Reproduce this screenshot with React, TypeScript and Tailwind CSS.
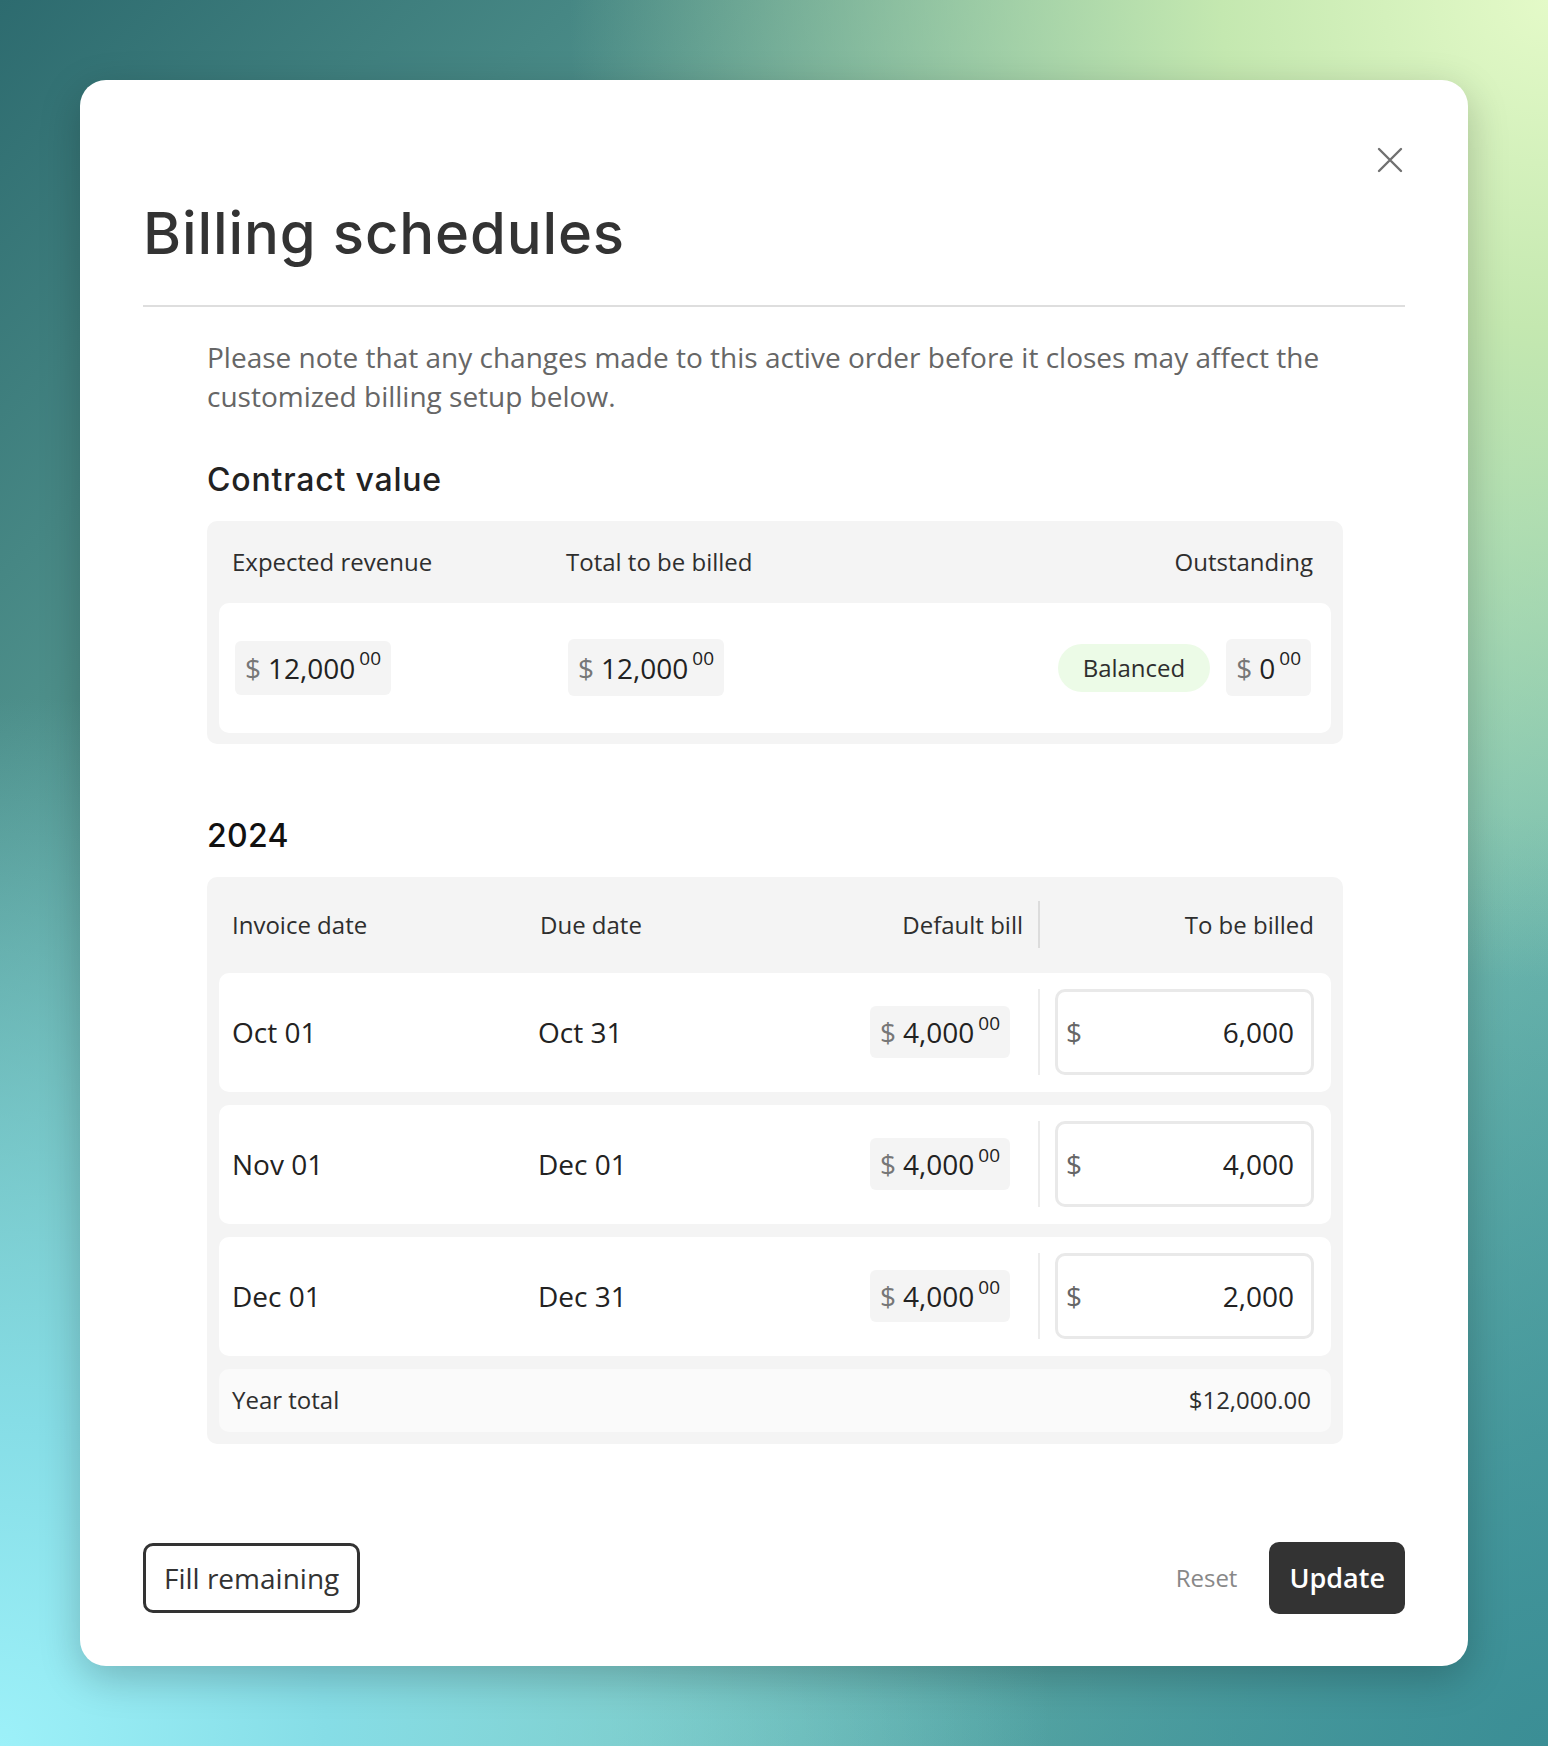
import React from 'react';

const heading = { fontFamily: 'Inter, "Noto Sans", sans-serif' };
const body = { fontFamily: '"Open Sans", "Noto Sans", sans-serif' };

function Money({ value, h = 'h-[54px]' }: { value: string; h?: string }) {
  return (
    <span className={`inline-flex ${h} items-center rounded-[6px] bg-[#f4f4f4] px-[10px] text-[28px] leading-none`}>
      <span className="text-[#777]">$</span>
      <span className="ml-[7px] text-[#222]">{value}</span>
      <sup className="ml-[4px] text-[19px] text-[#222]">00</sup>
    </span>
  );
}

interface Row {
  invoice: string;
  due: string;
  bill: string;
  toBill: string;
}

const rows: Row[] = [
  { invoice: 'Oct 01', due: 'Oct 31', bill: '4,000', toBill: '6,000' },
  { invoice: 'Nov 01', due: 'Dec 01', bill: '4,000', toBill: '4,000' },
  { invoice: 'Dec 01', due: 'Dec 31', bill: '4,000', toBill: '2,000' },
];

export default function App() {
  return (
    <div
      className="w-[1548px] h-[1746px] p-[80px] bg-[radial-gradient(circle_at_100%_0%,#e4fac8_0%,#c4e8b0_14%,transparent_42%),radial-gradient(circle_at_0%_100%,#9df1f9_0%,#86dde6_14%,transparent_45%),radial-gradient(circle_at_100%_100%,#3b8e95_0%,transparent_40%),linear-gradient(135deg,#2d6b6f_0%,#5fa399_35%,#83c6b4_60%,#4fa3a6_100%)]"
      style={body}
    >
      <div className="flex h-full flex-col rounded-[26px] bg-white px-[63px] pt-[56px] pb-[52px] shadow-[0_12px_40px_rgba(0,0,0,0.22)]">
        <div className="flex h-[48px] items-center justify-end pr-[2px]">
          <button className="flex h-[26px] w-[26px] items-center justify-center" aria-label="Close">
            <svg width="26" height="26" viewBox="0 0 26 26" fill="none">
              <path d="M2 2L24 24M24 2L2 24" stroke="#707070" strokeWidth="2.4" strokeLinecap="round" />
            </svg>
          </button>
        </div>

        <h1
          className="mt-[15px] text-[58px] leading-[1.2] font-medium tracking-[0.015em] text-[#333]"
          style={heading}
        >
          Billing schedules
        </h1>
        <div className="mt-[36px] h-[2px] bg-[#dedede]" />

        <div className="pl-[64px] pr-[62px]">
          <p className="mt-[31px] text-[28px] leading-[39px] text-[#666]">
            Please note that any changes made to this active order before it closes may affect the customized billing
            setup below.
          </p>

          <h2
            className="mt-[44px] text-[32px] leading-[40px] font-medium tracking-[0.025em] text-[#222]"
            style={heading}
          >
            Contract value
          </h2>

          <div className="mt-[21px] rounded-[10px] bg-[#f4f4f4] px-[12px] pb-[11px]">
            <div className="flex h-[82px] items-center px-[13px] text-[24px] font-medium text-[#2e2e2e]">
              <span className="w-[334px]">Expected revenue</span>
              <span className="flex-1">Total to be billed</span>
              <span className="pr-[5px]">Outstanding</span>
            </div>
            <div className="flex h-[130px] items-center rounded-[10px] bg-white pl-[16px] pr-[20px]">
              <div className="w-[333px]">
                <Money value="12,000" />
              </div>
              <div className="flex-1">
                <Money value="12,000" h="h-[57px]" />
              </div>
              <span className="flex h-[48px] items-center rounded-full bg-[#ecfbe7] px-[25px] text-[24px] font-medium text-[#2e2e2e]">
                Balanced
              </span>
              <span className="ml-[16px]">
                <Money value="0" h="h-[57px]" />
              </span>
            </div>
          </div>

          <h2
            className="mt-[72px] text-[32px] leading-[40px] font-medium tracking-[0.01em] text-[#111]"
            style={heading}
          >
            2024
          </h2>

          <div className="mt-[21px] rounded-[10px] bg-[#f4f4f4] px-[12px] pb-[12px]">
            <div className="flex h-[96px] items-center pl-[13px] pr-[17px] text-[24px] font-medium text-[#2e2e2e]">
              <span className="w-[308px]">Invoice date</span>
              <span className="flex-1">Due date</span>
              <span>Default bill</span>
              <span className="mx-[15px] h-[47px] w-[2px] bg-[#dcdcdc]" />
              <span className="w-[259px] text-right">To be billed</span>
            </div>

            <div className="flex flex-col gap-[13px]">
              {rows.map((r) => (
                <div
                  key={r.invoice}
                  className="flex h-[119px] items-center rounded-[10px] bg-white pl-[13px] pr-[17px] text-[28px] text-[#222]"
                >
                  <span className="w-[306px]">{r.invoice}</span>
                  <span className="flex-1">{r.due}</span>
                  <Money value={r.bill} h="h-[52px]" />
                  <span className="ml-[28px] mr-[15px] h-[86px] w-[2px] bg-[#ececec]" />
                  <div className="flex h-[86px] w-[259px] items-center justify-between rounded-[10px] border-[3px] border-[#e9e9e9] pl-[8px] pr-[17px]">
                    <span className="text-[#666]">$</span>
                    <span>{r.toBill}</span>
                  </div>
                </div>
              ))}

              <div className="flex h-[63px] items-center justify-between rounded-[10px] bg-[#fafafa] pl-[13px] pr-[20px] text-[24px] font-medium text-[#2e2e2e]">
                <span>Year total</span>
                <span>$12,000.00</span>
              </div>
            </div>
          </div>
        </div>

        <div className="mt-auto flex items-center justify-between">
          <button className="flex h-[70px] items-center rounded-[10px] border-[3px] border-[#333] px-[18px] text-[28px] font-medium text-[#333]">
            Fill remaining
          </button>
          <div className="flex items-center gap-[32px]">
            <button className="text-[24px] font-medium text-[#888]">Reset</button>
            <button className="flex h-[72px] items-center rounded-[10px] bg-[#333] px-[20px] text-[27px] font-semibold text-white">
              Update
            </button>
          </div>
        </div>
      </div>
    </div>
  );
}
